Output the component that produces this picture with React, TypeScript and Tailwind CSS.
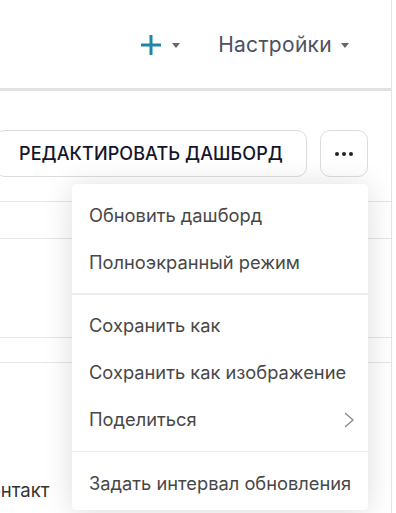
import React from "react";

const Caret = () => (
  <svg width="8" height="5" viewBox="0 0 8 5" className="shrink-0">
    <path d="M0 0 H8 L4 5 Z" fill="#666" />
  </svg>
);

const items1 = ["Обновить дашборд", "Полноэкранный режим"];
const items2 = ["Сохранить как", "Сохранить как изображение"];

export default function App() {
  return (
    <div
      className="relative w-[396px] h-[513px] overflow-hidden bg-white"
      style={{ fontFamily: "Inter, 'Noto Sans', sans-serif" }}
    >
      <div className="w-[392px] h-full border-r border-[#e4e4e4] flex flex-col">
        <header className="h-[91px] shrink-0 border-b-[3px] border-[#e2e2e2] flex items-center justify-end pr-[42px] pt-[2px]">
          <div className="flex items-center gap-[10px] mr-[38px]">
            <svg width="22" height="22" viewBox="0 0 22 22">
              <path d="M11 1 V21 M1 11 H21" stroke="#2185a8" strokeWidth="3" />
            </svg>
            <Caret />
          </div>
          <div className="flex items-center gap-[9px]">
            <span className="text-[21px] tracking-[0.3px] text-[#4d5160]">Настройки</span>
            <Caret />
          </div>
        </header>
        <div className="h-[111px] shrink-0 flex items-start justify-end gap-[13px] pr-[23px] pt-[39px] border-b border-[#e6e6e6]">
          <button className="shrink-0 w-[312px] h-[47px] rounded-[10px] border border-[#dcdcdc] bg-white text-[18px] font-medium text-[#14142b] tracking-[0.1px]">
            РЕДАКТИРОВАТЬ ДАШБОРД
          </button>
          <button className="shrink-0 w-[48px] h-[47px] rounded-[10px] border border-[#dcdcdc] bg-white flex items-center justify-center gap-[3px]">
            <span className="w-[4px] h-[4px] rounded-full bg-[#222]" />
            <span className="w-[4px] h-[4px] rounded-full bg-[#222]" />
            <span className="w-[4px] h-[4px] rounded-full bg-[#222]" />
          </button>
        </div>
        <div className="h-[37px] shrink-0 border-b border-[#e6e6e6]" />
        <div className="h-[99px] shrink-0 border-b border-[#e6e6e6]" />
        <div className="h-[25px] shrink-0 border-b border-[#e6e6e6]" />
        <div className="flex-1 relative">
          <div className="absolute left-[-22px] top-[114px] text-[18.5px] text-[#333] whitespace-nowrap">Контакт</div>
        </div>
      </div>

      <div className="absolute left-[72px] top-[184px] w-[296px] h-[326px] bg-white rounded-[4px] shadow-[0_2px_30px_rgba(0,0,0,0.14)] flex flex-col pt-[8px] text-[18.3px] text-[#474747] whitespace-nowrap">
        {items1.map((t) => (
          <div key={t} className="h-[47px] shrink-0 flex items-center px-[17px]">{t}</div>
        ))}
        <div className="h-[2px] shrink-0 bg-[#ececec] my-[7px]" />
        {items2.map((t) => (
          <div key={t} className="h-[47px] shrink-0 flex items-center px-[17px]">{t}</div>
        ))}
        <div className="h-[47px] shrink-0 flex items-center justify-between px-[17px] pr-[14px]">
          <span>Поделиться</span>
          <svg width="10" height="16" viewBox="0 0 10 16">
            <path d="M1 1 L9 8 L1 15" fill="none" stroke="#888" strokeWidth="1.3" />
          </svg>
        </div>
        <div className="h-px shrink-0 bg-[#ececec] my-[8px]" />
        <div className="h-[47px] shrink-0 flex items-center pl-[17px]">Задать интервал обновления</div>
      </div>
    </div>
  );
}
